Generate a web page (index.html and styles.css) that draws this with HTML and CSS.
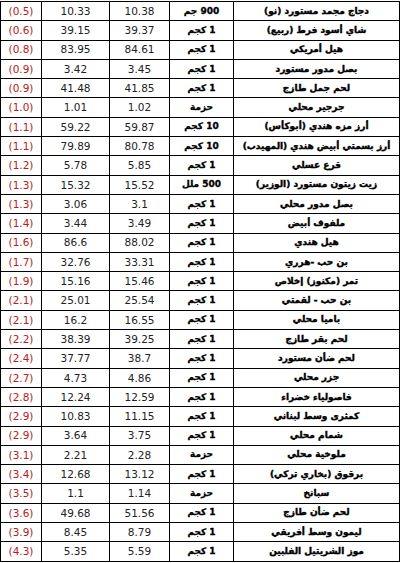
FILE: index.html
```html
<!DOCTYPE html>
<html lang="ar" dir="rtl">
<head>
<meta charset="utf-8">
<link rel="stylesheet" href="styles.css">
</head>
<body>
<table class="prices">
<colgroup>
<col class="c-name"><col class="c-unit"><col class="c-new"><col class="c-old"><col class="c-chg">
</colgroup>
<tbody>
<tr><td class="name">دجاج مجمد مستورد (نو)</td><td class="unit">900 جم</td><td class="num">10.38</td><td class="num">10.33</td><td class="chg">(0.5)</td></tr>
<tr><td class="name">شاي أسود فرط (ربيع)</td><td class="unit">1 كجم</td><td class="num">39.37</td><td class="num">39.15</td><td class="chg">(0.6)</td></tr>
<tr><td class="name">هيل أمريكي</td><td class="unit">1 كجم</td><td class="num">84.61</td><td class="num">83.95</td><td class="chg">(0.8)</td></tr>
<tr><td class="name">بصل مدور مستورد</td><td class="unit">1 كجم</td><td class="num">3.45</td><td class="num">3.42</td><td class="chg">(0.9)</td></tr>
<tr><td class="name">لحم جمل طازج</td><td class="unit">1 كجم</td><td class="num">41.85</td><td class="num">41.48</td><td class="chg">(0.9)</td></tr>
<tr><td class="name">جرجير محلي</td><td class="unit">حزمة</td><td class="num">1.02</td><td class="num">1.01</td><td class="chg">(1.0)</td></tr>
<tr><td class="name">أرز مزه هندي (أبوكأس)</td><td class="unit">10 كجم</td><td class="num">59.87</td><td class="num">59.22</td><td class="chg">(1.1)</td></tr>
<tr><td class="name">أرز بسمتي أبيض هندي (المهيدب)</td><td class="unit">10 كجم</td><td class="num">80.78</td><td class="num">79.89</td><td class="chg">(1.1)</td></tr>
<tr><td class="name">قرع عسلي</td><td class="unit">1 كجم</td><td class="num">5.85</td><td class="num">5.78</td><td class="chg">(1.2)</td></tr>
<tr><td class="name">زيت زيتون مستورد (الوزير)</td><td class="unit">500 ملل</td><td class="num">15.52</td><td class="num">15.32</td><td class="chg">(1.3)</td></tr>
<tr><td class="name">بصل مدور محلي</td><td class="unit">1 كجم</td><td class="num">3.1</td><td class="num">3.06</td><td class="chg">(1.3)</td></tr>
<tr><td class="name">ملفوف أبيض</td><td class="unit">1 كجم</td><td class="num">3.49</td><td class="num">3.44</td><td class="chg">(1.4)</td></tr>
<tr><td class="name">هيل هندي</td><td class="unit">1 كجم</td><td class="num">88.02</td><td class="num">86.6</td><td class="chg">(1.6)</td></tr>
<tr><td class="name">بن حب -هرري</td><td class="unit">1 كجم</td><td class="num">33.31</td><td class="num">32.76</td><td class="chg">(1.7)</td></tr>
<tr><td class="name">تمر (مكنوز) إخلاص</td><td class="unit">1 كجم</td><td class="num">15.46</td><td class="num">15.16</td><td class="chg">(1.9)</td></tr>
<tr><td class="name">بن حب - لقمتي</td><td class="unit">1 كجم</td><td class="num">25.54</td><td class="num">25.01</td><td class="chg">(2.1)</td></tr>
<tr><td class="name">باميا محلي</td><td class="unit">1 كجم</td><td class="num">16.55</td><td class="num">16.2</td><td class="chg">(2.1)</td></tr>
<tr><td class="name">لحم بقر طازج</td><td class="unit">1 كجم</td><td class="num">39.25</td><td class="num">38.39</td><td class="chg">(2.2)</td></tr>
<tr><td class="name">لحم ضأن مستورد</td><td class="unit">1 كجم</td><td class="num">38.7</td><td class="num">37.77</td><td class="chg">(2.4)</td></tr>
<tr><td class="name">جزر محلي</td><td class="unit">1 كجم</td><td class="num">4.86</td><td class="num">4.73</td><td class="chg">(2.7)</td></tr>
<tr><td class="name">فاصولياء خضراء</td><td class="unit">1 كجم</td><td class="num">12.59</td><td class="num">12.24</td><td class="chg">(2.8)</td></tr>
<tr><td class="name">كمثرى وسط لبناني</td><td class="unit">1 كجم</td><td class="num">11.15</td><td class="num">10.83</td><td class="chg">(2.9)</td></tr>
<tr><td class="name">شمام محلي</td><td class="unit">1 كجم</td><td class="num">3.75</td><td class="num">3.64</td><td class="chg">(2.9)</td></tr>
<tr><td class="name">ملوخية محلي</td><td class="unit">حزمة</td><td class="num">2.28</td><td class="num">2.21</td><td class="chg">(3.1)</td></tr>
<tr><td class="name">برقوق (بخاري تركي)</td><td class="unit">1 كجم</td><td class="num">13.12</td><td class="num">12.68</td><td class="chg">(3.4)</td></tr>
<tr><td class="name">سبانخ</td><td class="unit">حزمة</td><td class="num">1.14</td><td class="num">1.1</td><td class="chg">(3.5)</td></tr>
<tr><td class="name">لحم ضأن طازج</td><td class="unit">1 كجم</td><td class="num">51.56</td><td class="num">49.68</td><td class="chg">(3.6)</td></tr>
<tr><td class="name">ليمون وسط أفريقي</td><td class="unit">1 كجم</td><td class="num">8.79</td><td class="num">8.45</td><td class="chg">(3.9)</td></tr>
<tr><td class="name">موز الشريتيل الفلبين</td><td class="unit">1 كجم</td><td class="num">5.59</td><td class="num">5.35</td><td class="chg">(4.3)</td></tr>
</tbody>
</table>
</body>
</html>
```

FILE: styles.css
```css
html, body {
  margin: 0;
  padding: 0;
  background: #ffffff;
}
body {
  padding: 1px 4px 0 1px;
}
.prices {
  border-collapse: collapse;
  table-layout: fixed;
  width: 399px;
  direction: rtl;
}
.c-name { width: 166px; }
.c-unit { width: 64px; }
.c-new { width: 60px; }
.c-old { width: 68px; }
.c-chg { width: 41px; }
.prices td {
  border: 1px solid #000;
  height: 18.3px;
  padding: 0;
  text-align: center;
  vertical-align: middle;
  white-space: nowrap;
  overflow: hidden;
  line-height: 1;
}
.name {
  font-family: "DejaVu Sans", sans-serif;
  font-weight: bold;
  font-size: 9px;
  color: #000;
  -webkit-text-stroke: 0.4px #000;
}
.unit {
  font-family: "DejaVu Sans", sans-serif;
  font-weight: bold;
  font-size: 9px;
  color: #000;
  -webkit-text-stroke: 0.3px #000;
}
.num, .chg {
  font-family: "DejaVu Sans", sans-serif;
  font-size: 10.5px;
  color: #222;
  direction: ltr;
}
.chg {
  color: #b52020;
}
```
